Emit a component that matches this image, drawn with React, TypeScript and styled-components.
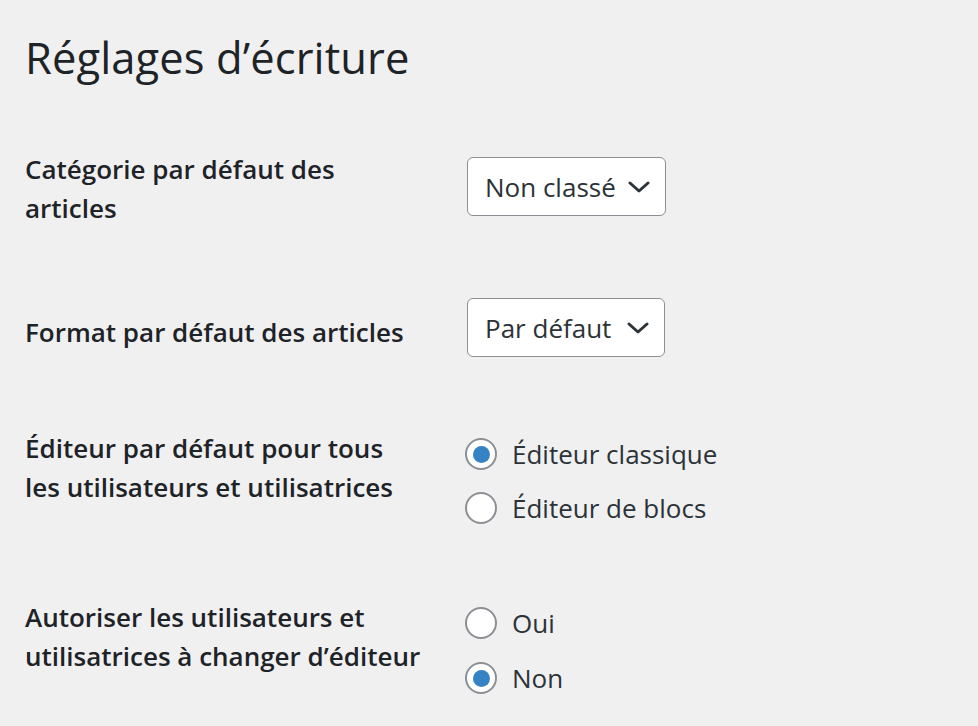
import React from 'react';
import styled, { createGlobalStyle } from 'styled-components';

const GlobalStyle = createGlobalStyle`
  html, body {
    margin: 0;
    padding: 0;
    background: #f0f0f1;
  }
  body {
    font-family: 'Open Sans', 'Noto Sans', sans-serif;
    color: #1d2327;
  }
`;

const Page = styled.div`
  padding: 0 25px;
  width: 978px;
  height: 726px;
  box-sizing: border-box;
  overflow: hidden;
`;

const Title = styled.h1`
  margin: 32px 0 0 0;
  font-size: 43.5px;
  font-weight: 400;
  line-height: 51px;
  color: #1d2327;
  letter-spacing: 0.1px;
`;

const FormTable = styled.div`
  display: flex;
  flex-direction: column;
`;

const Row = styled.div<{ $top: number }>`
  display: grid;
  grid-template-columns: 440px 1fr;
  align-items: start;
  margin-top: ${p => p.$top}px;
`;

const Label = styled.div<{ $pad?: number }>`
  padding-top: ${p => p.$pad || 0}px;
  font-size: 26px;
  font-weight: 600;
  line-height: 39px;
  color: #1d2327;
  white-space: nowrap;
`;

const Control = styled.div<{ $pad?: number }>`
  padding-top: ${p => p.$pad || 0}px;
  display: flex;
  flex-direction: column;
  align-items: flex-start;
`;

const Select = styled.div<{ $w: number }>`
  display: inline-flex;
  align-items: center;
  justify-content: space-between;
  box-sizing: border-box;
  height: 59px;
  width: ${p => p.$w}px;
  margin-left: 2px;
  padding: 0 15px 0 17px;
  background: #fff;
  border: 1.5px solid #8c8f94;
  border-radius: 6px;
  font-size: 26px;
  color: #2c3338;
  white-space: nowrap;
`;

const Chevron = () => (
  <svg width="22" height="14" viewBox="0 0 22 14" fill="none">
    <path d="M2 3 L11 11 L20 3" stroke="#2c3338" strokeWidth="3" strokeLinecap="round" strokeLinejoin="round" />
  </svg>
);

const RadioItem = styled.label<{ $gap?: number }>`
  display: flex;
  align-items: center;
  height: 40px;
  margin-bottom: ${p => p.$gap || 0}px;
  font-size: 26px;
  color: #2c3338;
  white-space: nowrap;
`;

const RadioCircle = styled.span<{ $checked?: boolean }>`
  position: relative;
  box-sizing: border-box;
  width: 32px;
  height: 32px;
  border-radius: 50%;
  border: 2px solid #8c8f94;
  background: #fff;
  margin-right: 15px;
  flex-shrink: 0;

  &::after {
    content: '';
    display: ${p => (p.$checked ? 'block' : 'none')};
    position: absolute;
    left: 50%;
    top: 50%;
    width: 17px;
    height: 17px;
    margin: -8.5px 0 0 -8.5px;
    border-radius: 50%;
    background: #3582c4;
  }
`;

export default function App() {
  return (
    <>
      <GlobalStyle />
      <Page>
        <Title>Réglages d’écriture</Title>
        <FormTable>
          <Row $top={67}>
            <Label>
              Catégorie par défaut des
              <br />
              articles
            </Label>
            <Control $pad={7}>
              <Select $w={199}>
                <span>Non classé</span>
                <Chevron />
              </Select>
            </Control>
          </Row>
          <Row $top={70}>
            <Label $pad={15}>Format par défaut des articles</Label>
            <Control>
              <Select $w={198}>
                <span>Par défaut</span>
                <Chevron />
              </Select>
            </Control>
          </Row>
          <Row $top={72}>
            <Label>
              Éditeur par défaut pour tous
              <br />
              les utilisateurs et utilisatrices
            </Label>
            <Control $pad={5}>
              <RadioItem $gap={14}>
                <RadioCircle $checked />
                Éditeur classique
              </RadioItem>
              <RadioItem>
                <RadioCircle />
                Éditeur de blocs
              </RadioItem>
            </Control>
          </Row>
          <Row $top={70}>
            <Label>
              Autoriser les utilisateurs et
              <br />
              utilisatrices à changer d’éditeur
            </Label>
            <Control $pad={5}>
              <RadioItem $gap={15}>
                <RadioCircle />
                Oui
              </RadioItem>
              <RadioItem>
                <RadioCircle $checked />
                Non
              </RadioItem>
            </Control>
          </Row>
        </FormTable>
      </Page>
    </>
  );
}
